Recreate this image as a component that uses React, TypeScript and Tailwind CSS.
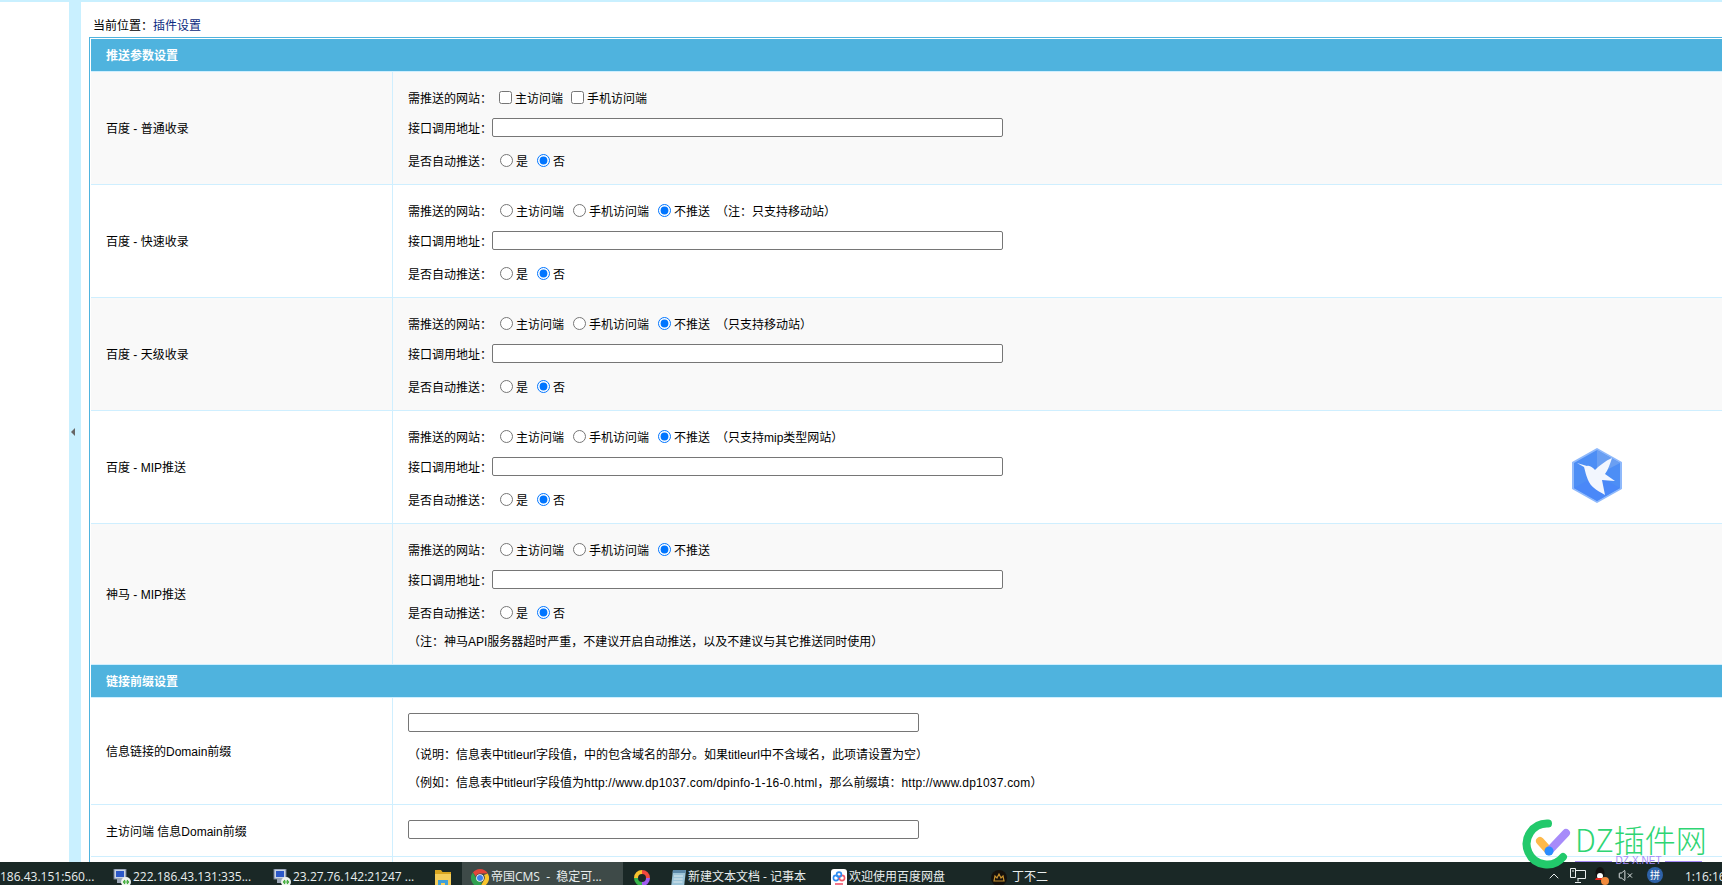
import { ChevronUp, VolumeX } from "lucide-react";

const font = "[font-family:'Liberation_Sans','Noto_Sans_CJK_SC',sans-serif]";

function Radio({ checked = false, name, className = "" }: { checked?: boolean; name: string; className?: string }) {
  return <input type="radio" name={name} defaultChecked={checked} className={`m-0 h-[13px] w-[13px] shrink-0 ${className}`} />;
}

function Line({ children, className = "" }: { children: React.ReactNode; className?: string }) {
  return <div className={`flex h-6 items-center whitespace-pre ${className}`}>{children}</div>;
}

function AutoPush({ name }: { name: string }) {
  return (
    <Line className="mt-3">
      <span className="w-[84px] pt-[2px]">是否自动推送：</span>
      <Radio name={name} className="ml-2 -translate-y-px" />
      <span className="ml-[3px] pt-[2px]">是</span>
      <Radio name={name} checked className="ml-[9px] -translate-y-px" />
      <span className="ml-[3px] pt-[2px]">否</span>
    </Line>
  );
}

function ApiInput() {
  return (
    <div className="mt-[7px] flex h-[19px] items-center">
      <span className="w-[84px] pt-[2px]">接口调用地址：</span>
      <input className="h-[19px] w-[511px] rounded-[2px] border border-[#767676] bg-white" />
    </div>
  );
}

function SiteRadios({ name, note }: { name: string; note?: string }) {
  return (
    <Line>
      <span className="w-[84px]">需推送的网站：</span>
      <Radio name={name} className="ml-2 -translate-y-[2px]" />
      <span className="ml-[3px] w-[48px]">主访问端</span>
      <Radio name={name} className="ml-[9px] -translate-y-[2px]" />
      <span className="ml-[3px] w-[60px]">手机访问端</span>
      <Radio name={name} checked className="ml-[9px] -translate-y-[2px]" />
      <span className="ml-[3px]">不推送</span>
      {note && <span className="ml-[6px]">{note}</span>}
    </Line>
  );
}

function Row({ label, alt, children }: { label: string; alt?: boolean; children: React.ReactNode }) {
  return (
    <tr className={alt ? "bg-[#f9f9f9]" : "bg-white"}>
      <td className="border-r border-b border-[#cfefff] pt-[2px] pl-[15px] align-middle">{label}</td>
      <td className="border-b border-[#cfefff] pt-[15px] pr-4 pb-[11px] pl-[15px] align-top">{children}</td>
    </tr>
  );
}

function SectionHead({ title }: { title: string }) {
  return (
    <tr>
      <th colSpan={2} className="h-[33px] border-b border-[#cfefff] bg-[#4fb3de] pt-[2px] pl-[15px] text-left font-bold text-white">
        {title}
      </th>
    </tr>
  );
}

function RdpIcon() {
  return (
    <svg width="18" height="18" viewBox="0 0 18 18" className="shrink-0">
      <rect x="1" y="0" width="12" height="10" fill="#c9d3e4" stroke="#6f7a90" />
      <rect x="3" y="2" width="8" height="6" fill="#2c58c8" />
      <rect x="4" y="10" width="8" height="4" fill="#9aa5b5" />
      <circle cx="13" cy="13" r="5" fill="#eef2ee" />
      <path d="M10.5 13h5M12 11l-1.5 2 1.5 2M14 11l1.5 2-1.5 2" stroke="#35a82f" strokeWidth="1.2" fill="none" />
    </svg>
  );
}

function ChromeIcon() {
  return (
    <svg width="18" height="18" viewBox="0 0 18 18" className="shrink-0">
      <path d="M9 0a9 9 0 0 1 7.8 4.5H9a4.5 4.5 0 0 0-4.2 3L1.9 3.5A9 9 0 0 1 9 0z" fill="#e2453a" />
      <path d="M16.8 4.5A9 9 0 0 1 9 18l3.9-6.7A4.5 4.5 0 0 0 12.9 6z" fill="#f8c52c" />
      <path d="M9 18A9 9 0 0 1 1.9 3.5l3.9 6.8A4.5 4.5 0 0 0 11 13z" fill="#2fa04f" />
      <circle cx="9" cy="9" r="3.8" fill="#fff" />
      <circle cx="9" cy="9" r="3" fill="#3d80ee" />
    </svg>
  );
}

function FolderIcon() {
  return (
    <svg width="16" height="18" viewBox="0 0 16 18" className="shrink-0">
      <path d="M0 1h6l1.5 2H16v3H0z" fill="#d9a520" />
      <rect x="0" y="5" width="16" height="13" fill="#f5cd5a" />
      <rect x="3" y="11" width="10" height="7" fill="#3f9fd8" />
      <rect x="6" y="14" width="4" height="4" fill="#f5cd5a" />
    </svg>
  );
}

function RingIcon() {
  return (
    <svg width="16" height="18" viewBox="0 0 16 16" className="shrink-0">
      <path d="M8 0a8 8 0 0 1 8 8h-4a4 4 0 0 0-4-4z" fill="#f0483e" />
      <path d="M16 8a8 8 0 0 1-8 8v-4a4 4 0 0 0 4-4z" fill="#a05cf0" />
      <path d="M8 16a8 8 0 0 1-8-8h4a4 4 0 0 0 4 4z" fill="#37b34a" />
      <path d="M0 8a8 8 0 0 1 8-8v4a4 4 0 0 0-4 4z" fill="#f9c22e" />
    </svg>
  );
}

function NotepadIcon() {
  return (
    <svg width="16" height="18" viewBox="0 0 16 18" className="shrink-0">
      <path d="M3 1h13l-2 17H1z" fill="#9cc4d8" />
      <path d="M3 1h13l-.4 3H2.7z" fill="#5b88a8" />
      <path d="M4 7h9M3.7 10h9M3.4 13h9" stroke="#dbe9ee" />
    </svg>
  );
}

function PanIcon() {
  return (
    <svg width="16" height="18" viewBox="0 0 16 18" className="shrink-0">
      <rect width="16" height="18" rx="3" fill="#fff" />
      <circle cx="5" cy="9" r="2.6" fill="none" stroke="#2e8cf0" strokeWidth="1.6" />
      <circle cx="11" cy="9" r="2.6" fill="none" stroke="#ef5a6a" strokeWidth="1.6" />
      <circle cx="8" cy="5.5" r="2.4" fill="none" stroke="#2e8cf0" strokeWidth="1.6" />
      <rect x="4" y="14" width="8" height="2" fill="#f2758a" />
    </svg>
  );
}

function CrownIcon() {
  return (
    <svg width="16" height="18" viewBox="0 0 16 16" className="shrink-0">
      <circle cx="8" cy="8" r="8" fill="#15110c" />
      <path d="M3 11l1-5 2 2 2-4 2 4 2-2 1 5z" fill="none" stroke="#c8922f" strokeWidth="1.2" />
    </svg>
  );
}

function TaskItem({ width, icon, text, active }: { width: string; icon?: React.ReactNode; text?: string; active?: boolean }) {
  return (
    <div className={`flex h-full shrink-0 items-start gap-[2px] overflow-hidden pt-[7px] ${width} ${active ? "bg-[#3e4a48] pl-[9px]" : ""}`}>
      {icon}
      {text && <span className="-mt-[1px] whitespace-pre leading-[18px] text-[#e9eeee]">{text}</span>}
    </div>
  );
}

function Taskbar() {
  return (
    <div className="flex h-[23px] shrink-0 overflow-hidden bg-[#1a2826] text-[12px] [font-family:'Open_Sans','Noto_Sans_CJK_SC',sans-serif]">
      <TaskItem width="w-[113px]" text="186.43.151:560..." />
      <TaskItem width="w-[160px]" icon={<RdpIcon />} text="222.186.43.131:335..." />
      <TaskItem width="w-[162px]" icon={<RdpIcon />} text="23.27.76.142:21247 ..." />
      <TaskItem width="w-[27px]" icon={<FolderIcon />} />
      <TaskItem width="w-[161px]" icon={<ChromeIcon />} text="帝国CMS  -  稳定可..." active />
      <div className="w-[11px] shrink-0" />
      <TaskItem width="w-[36px]" icon={<RingIcon />} />
      <TaskItem width="w-[161px]" icon={<NotepadIcon />} text="新建文本文档 - 记事本" />
      <TaskItem width="w-[160px]" icon={<PanIcon />} text="欢迎使用百度网盘" />
      <TaskItem width="w-[100px]" icon={<CrownIcon />} text=" 丁不二" />
      {/* tray */}
      <div className="ml-auto flex w-[174px] shrink-0 items-start pt-[5px] text-[#e9eeee]">
        <ChevronUp size={16} strokeWidth={1.5} className="mt-[1px] mr-2 -ml-[2px] shrink-0" />
        <svg width="16" height="15" viewBox="0 0 16 15" fill="none" stroke="#e9eeee" className="mt-[1px] mr-2 shrink-0">
          <path d="M.5.5h5v9h-5zM5.5 2.5h10v8h-8M8 10.5v3M5 14.5h6M2 3h2" />
        </svg>
        <svg width="15" height="18" viewBox="0 0 15 18" className="mr-[9px] shrink-0">
          <ellipse cx="6" cy="6" rx="4.5" ry="6" fill="#111" />
          <ellipse cx="6" cy="9" rx="3" ry="3" fill="#fff" />
          <path d="M2 11h8l1 2H1z" fill="#e3261f" />
          <circle cx="11" cy="14" r="4" fill="#f08a3c" />
        </svg>
        <VolumeX size={15} strokeWidth={1.5} className="mt-[1px] mr-[14px] shrink-0" />
        <div className="mr-[22px] flex h-4 w-4 shrink-0 items-center justify-center rounded-full bg-[#2e62a8] text-[10px] leading-none text-white">拼</div>
        <div className="-mt-[1px] w-[37px] shrink-0 overflow-hidden leading-[22px] whitespace-nowrap">1:16:16</div>
      </div>
    </div>
  );
}

export default function App() {
  return (
    <div className={`relative flex h-[885px] w-full flex-col overflow-hidden bg-white text-[12px] leading-6 text-black ${font}`}>
      <div className="h-[2px] shrink-0 bg-[#c9f0ff]" />

      <div className="flex min-h-0 flex-1">
        {/* left nav is collapsed to blank */}
        <div className="w-[69px] shrink-0 bg-white" />
        <div className="flex w-3 shrink-0 items-center justify-center bg-[#c9f0ff]">
          <div className="h-0 w-0 -translate-x-[2px] border-y-4 border-r-4 border-y-transparent border-r-[#666]" />
        </div>

        {/* Content */}
        <div className="min-w-0 flex-1 pl-2">
          <div className="h-[35px] pt-3 pl-1 leading-[25px]">
            当前位置：<span className="text-[#0b2a80]">插件设置</span>
          </div>

          <div className="border-t border-l border-[#4fb3de] pt-px pl-px">
            <table className="w-full table-fixed border-separate border-spacing-0">
              <colgroup>
                <col className="w-[302px]" />
                <col />
              </colgroup>
              <tbody>
                <SectionHead title="推送参数设置" />

                <Row label="百度 - 普通收录" alt>
                  <Line>
                    <span className="w-[84px]">需推送的网站：</span>
                    <input type="checkbox" className="m-0 ml-[7px] h-[13px] w-[13px] shrink-0 -translate-y-[2px]" />
                    <span className="ml-[3px] w-[48px]">主访问端</span>
                    <input type="checkbox" className="m-0 ml-2 h-[13px] w-[13px] shrink-0 -translate-y-[2px]" />
                    <span className="ml-[3px]">手机访问端</span>
                  </Line>
                  <ApiInput />
                  <AutoPush name="bd1" />
                </Row>

                <Row label="百度 - 快速收录">
                  <SiteRadios name="s2" note="（注：只支持移动站）" />
                  <ApiInput />
                  <AutoPush name="bd2" />
                </Row>

                <Row label="百度 - 天级收录" alt>
                  <SiteRadios name="s3" note="（只支持移动站）" />
                  <ApiInput />
                  <AutoPush name="bd3" />
                </Row>

                <Row label="百度 - MIP推送">
                  <SiteRadios name="s4" note="（只支持mip类型网站）" />
                  <ApiInput />
                  <AutoPush name="bd4" />
                </Row>

                <Row label="神马 - MIP推送" alt>
                  <SiteRadios name="s5" />
                  <ApiInput />
                  <AutoPush name="bd5" />
                  <Line className="mt-[5px] -mb-px">（注：神马API服务器超时严重，不建议开启自动推送，以及不建议与其它推送同时使用）</Line>
                </Row>

                <SectionHead title="链接前缀设置" />

                <tr>
                  <td className="border-r border-b border-[#cfefff] pt-[2px] pl-[15px]">信息链接的Domain前缀</td>
                  <td className="h-[107px] border-b border-[#cfefff] pt-[15px] pl-[15px] align-top">
                    <input className="block h-[19px] w-[511px] rounded-[2px] border border-[#767676] bg-white" />
                    <div className="mt-[11px] h-6 leading-6">（说明：信息表中titleurl字段值，中的包含域名的部分。如果titleurl中不含域名，此项请设置为空）</div>
                    <div className="mt-[4px] h-6 leading-6">
                      （例如：信息表中titleurl字段值为<span className="tracking-[0.2px]">http://www.dp1037.com/dpinfo-1-16-0.html</span>，那么前缀填：<span className="tracking-[0.2px]">http://www.dp1037.com</span>）
                    </div>
                  </td>
                </tr>

                <tr>
                  <td className="border-r border-b border-[#cfefff] pt-[2px] pl-[15px]">主访问端 信息Domain前缀</td>
                  <td className="h-[52px] border-b border-[#cfefff] pt-[15px] pl-[15px] align-top">
                    <input className="block h-[19px] w-[511px] rounded-[2px] border border-[#767676] bg-white" />
                  </td>
                </tr>

                <tr>
                  <td className="h-10 border-r border-[#cfefff]" />
                  <td />
                </tr>
              </tbody>
            </table>
          </div>
        </div>
      </div>

      <Taskbar />

      {/* floating bird badge */}
      <svg width="52" height="57" viewBox="-1 -1 52 57" className="absolute top-[447px] left-[1571px]">
        <path d="M25 1L49 14.5V40.5L25 54L1 40.5V14.5Z" fill="#4d8ef5" stroke="#8fb9fb" strokeWidth="2" strokeLinejoin="round" />
        <path d="M25 2L48 15L25 27Z" fill="#6a9ff2" />
        <path d="M25 27L48 40L25 53L2 40Z" fill="#4a88f8" />
        <path d="M5 15L15 18C18 17 21 20 23 22C27 18 33 13 40 10C38 16 36 22 33 26L43 33C38 33 34 32 30 32C31 37 32 42 33 47C28 44 20 40 17 34C14 28 13 22 12 19Z" fill="#f2f6fe" />
      </svg>

      {/* watermark */}
      <svg width="52" height="54" viewBox="0 0 52 54" className="absolute top-[818px] left-[1520px]">
        <path d="M28 5.5A20.5 20.5 0 1 0 43 39" fill="none" stroke="#22c96b" strokeWidth="8" strokeLinecap="round" />
        <path d="M20 23L29 33" stroke="#fdb94a" strokeWidth="8" strokeLinecap="round" />
        <path d="M29 33L46 15" stroke="#a78bfa" strokeWidth="8" strokeLinecap="round" />
        <circle cx="29" cy="33" r="4.5" fill="#2a8cff" />
      </svg>
      <div className="absolute top-[822px] left-[1575px] text-[31px] leading-[34px] font-light whitespace-nowrap text-[#2ed573] [font-family:'Noto_Sans_CJK_SC',sans-serif]">DZ插件网</div>
      <div className="absolute top-[856px] left-[1575px] flex w-[127px] items-center gap-[3px] text-[10px] leading-[10px] text-[#a78bfa]">
        <span className="h-px flex-1 bg-[#a78bfa]" />
        DZ-X.NET
        <span className="h-px flex-1 bg-[#a78bfa]" />
      </div>
    </div>
  );
}
